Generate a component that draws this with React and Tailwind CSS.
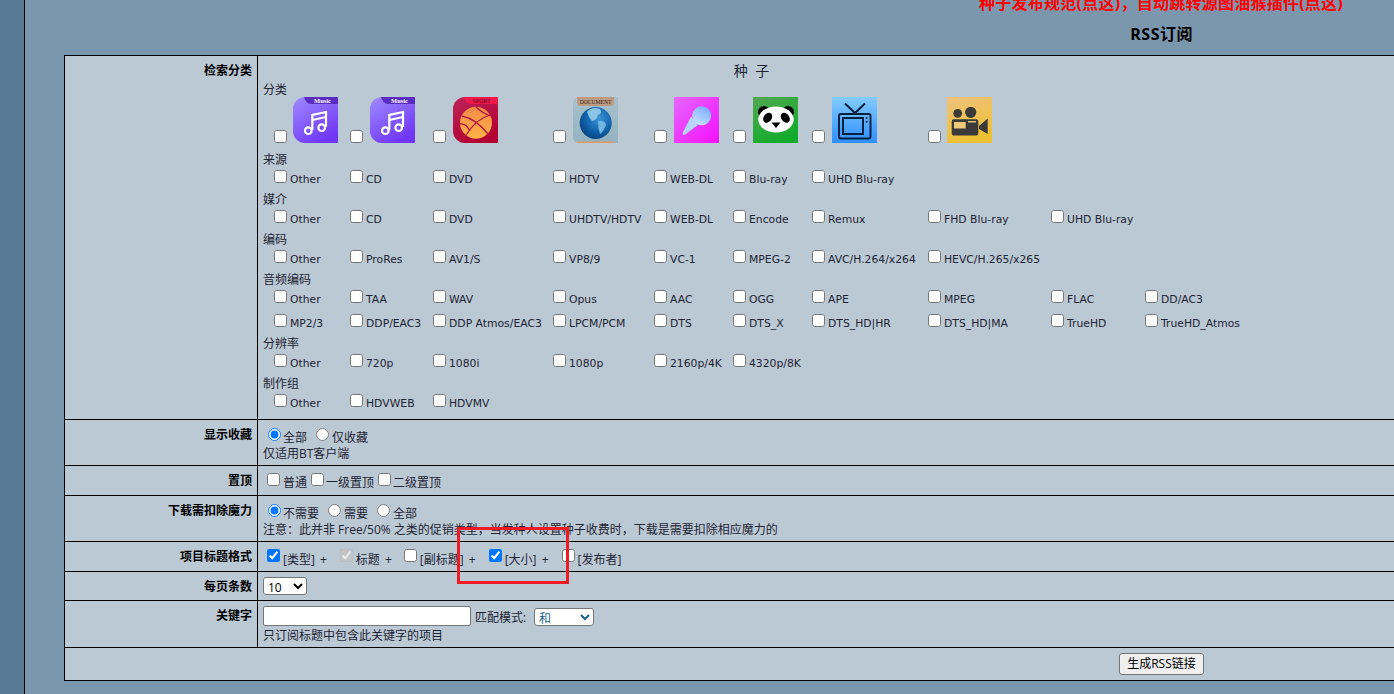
import React from "react";

const FONT = { fontFamily: '"Open Sans", "Noto Sans CJK SC", sans-serif' };

const COLS = "grid grid-cols-[87px_83px_120px_101px_79px_79px_116px_123px_94px_95px]";

const SECTIONS = [
  { title: "来源", rows: [["Other", "CD", "DVD", "HDTV", "WEB-DL", "Blu-ray", "UHD Blu-ray"]] },
  { title: "媒介", rows: [["Other", "CD", "DVD", "UHDTV/HDTV", "WEB-DL", "Encode", "Remux", "FHD Blu-ray", "UHD Blu-ray"]] },
  { title: "编码", rows: [["Other", "ProRes", "AV1/S", "VP8/9", "VC-1", "MPEG-2", "AVC/H.264/x264", "HEVC/H.265/x265"]] },
  {
    title: "音频编码",
    rows: [
      ["Other", "TAA", "WAV", "Opus", "AAC", "OGG", "APE", "MPEG", "FLAC", "DD/AC3"],
      ["MP2/3", "DDP/EAC3", "DDP Atmos/EAC3", "LPCM/PCM", "DTS", "DTS_X", "DTS_HD|HR", "DTS_HD|MA", "TrueHD", "TrueHD_Atmos"],
    ],
  },
  { title: "分辨率", rows: [["Other", "720p", "1080i", "1080p", "2160p/4K", "4320p/8K"]] },
  { title: "制作组", rows: [["Other", "HDVWEB", "HDVMV"]] },
];

const Box = ({ className = "", ...rest }) => (
  <input type="checkbox" className={"w-[13px] h-[13px] " + className} readOnly {...rest} />
);

const Radio = ({ className = "", ...rest }) => (
  <input type="radio" className={"w-[13px] h-[13px] " + className} readOnly {...rest} />
);

const MusicIcon = ({ id }) => (
  <svg width="45" height="46" viewBox="0 0 45 46" className="block">
    <defs>
      <linearGradient id={id} x1="0" y1="0" x2="0.6" y2="1">
        <stop offset="0" stopColor="#a08cff" />
        <stop offset="1" stopColor="#7037f5" />
      </linearGradient>
    </defs>
    <path d="M12 0H45V46H12A12 12 0 0 1 0 34V12A12 12 0 0 1 12 0Z" fill={`url(#${id})`} />
    <path d="M11 0H45V7H18Q13 7 11 0Z" fill="#5a2cc0" />
    <text x="29.5" y="5.6" fontSize="6.5" fontWeight="700" fill="#fff" textAnchor="middle" fontFamily="Liberation Serif, serif">Music</text>
    <g fill="none" stroke="#fff" strokeWidth="2.2">
      <circle cx="15.3" cy="33.7" r="3.3" />
      <circle cx="28.7" cy="30.7" r="3.3" />
      <path d="M19.3 33V18L33 15V30" />
      <path d="M19.3 23L33 20" />
    </g>
  </svg>
);

const SportIcon = () => (
  <svg width="45" height="46" viewBox="0 0 45 46" className="block">
    <defs>
      <linearGradient id="sp" x1="0" y1="0" x2="0.5" y2="1">
        <stop offset="0" stopColor="#bd2459" />
        <stop offset="1" stopColor="#b30032" />
      </linearGradient>
      <linearGradient id="ball" x1="0" y1="0" x2="0" y2="1">
        <stop offset="0" stopColor="#f28a4a" />
        <stop offset="1" stopColor="#ffb347" />
      </linearGradient>
    </defs>
    <path d="M12 0H45V46H12A12 12 0 0 1 0 34V12A12 12 0 0 1 12 0Z" fill="url(#sp)" />
    <path d="M11 0H45V7H18Q13 7 11 0Z" fill="#f0184a" />
    <text x="28.5" y="5.8" fontSize="6" fill="#5c0a1e" textAnchor="middle" fontFamily="Liberation Serif, serif">SPORT</text>
    <circle cx="23" cy="25.7" r="16" fill="url(#ball)" />
    <g fill="none" stroke="#b3173f" strokeWidth="1.3">
      <path d="M9 19Q23 22 35 37" />
      <path d="M37 18Q23 22 13 38" />
      <path d="M23 10Q29 16 38 19" />
      <path d="M7 27Q13 26 17 34" />
    </g>
  </svg>
);

const DocIcon = () => (
  <svg width="45" height="46" viewBox="0 0 45 46" className="block">
    <defs>
      <linearGradient id="doc" x1="0" y1="0" x2="0" y2="1">
        <stop offset="0" stopColor="#a7c2cd" />
        <stop offset="1" stopColor="#94b2c0" />
      </linearGradient>
      <radialGradient id="globe" cx="0.6" cy="0.35" r="0.75">
        <stop offset="0" stopColor="#3f94d8" />
        <stop offset="0.6" stopColor="#0f5fa5" />
        <stop offset="1" stopColor="#083c78" />
      </radialGradient>
    </defs>
    <path d="M6 0H45V46H6A6 6 0 0 1 0 40V6A6 6 0 0 1 6 0Z" fill="url(#doc)" />
    <path d="M4 0H41V6Q41 9 37 9H8Q4 9 4 6Z" fill="#bd9a80" />
    <text x="22.5" y="7" fontSize="5.6" fill="#2e2520" textAnchor="middle" fontFamily="Liberation Serif, serif">DOCUMENT</text>
    <rect x="4" y="44.5" width="37" height="1.5" fill="#dd9b63" />
    <circle cx="22.7" cy="26" r="16" fill="url(#globe)" />
    <path d="M14 15Q19 9 27 12Q30 16 25 18Q24 23 19 24Q16 21 14 15Z" fill="#8cc4e6" />
    <path d="M25 24Q32 23 33 28Q30 35 27 37Q25 31 25 24Z" fill="#6fb6e0" />
  </svg>
);

const MicIcon = () => (
  <svg width="45" height="46" viewBox="0 0 45 46" className="block">
    <defs>
      <linearGradient id="micbg" x1="0" y1="0" x2="1" y2="1">
        <stop offset="0" stopColor="#e668ff" />
        <stop offset="1" stopColor="#f40fff" />
      </linearGradient>
      <linearGradient id="mic" x1="0.8" y1="0" x2="0.2" y2="1">
        <stop offset="0" stopColor="#78aaff" />
        <stop offset="1" stopColor="#c9e4ff" />
      </linearGradient>
    </defs>
    <rect width="45" height="46" fill="url(#micbg)" />
    <circle cx="27.7" cy="18.7" r="9.5" fill="url(#mic)" />
    <path d="M17 19.5L24 28L11 37.5L9 38L8.5 36Z" fill="#b5d6fb" />
  </svg>
);

const PandaIcon = () => (
  <svg width="45" height="46" viewBox="0 0 45 46" className="block">
    <defs>
      <linearGradient id="pan" x1="0" y1="0" x2="0.5" y2="1">
        <stop offset="0" stopColor="#52a852" />
        <stop offset="1" stopColor="#14ab2c" />
      </linearGradient>
    </defs>
    <rect width="45" height="46" fill="url(#pan)" />
    <circle cx="11" cy="15" r="6" fill="#000" />
    <circle cx="35" cy="15" r="6" fill="#000" />
    <ellipse cx="23" cy="22.5" rx="17.7" ry="13" fill="#fff" />
    <ellipse cx="14.7" cy="20.7" rx="4" ry="5.5" transform="rotate(35 14.7 20.7)" fill="#000" />
    <ellipse cx="32.3" cy="20.7" rx="4" ry="5.5" transform="rotate(-35 32.3 20.7)" fill="#000" />
    <path d="M18.5 25.5H27.5L23 31Z" fill="#000" />
  </svg>
);

const TvIcon = () => (
  <svg width="45" height="46" viewBox="0 0 45 46" className="block">
    <defs>
      <linearGradient id="tv" x1="0" y1="0" x2="0" y2="1">
        <stop offset="0" stopColor="#83ccff" />
        <stop offset="1" stopColor="#2f8fff" />
      </linearGradient>
    </defs>
    <rect width="45" height="46" fill="url(#tv)" />
    <g fill="none" stroke="#06203f" strokeWidth="2">
      <path d="M13 6.5L23 16L33 6.5" />
      <rect x="7" y="17" width="31.5" height="24.5" rx="2" />
      <rect x="11" y="21" width="20" height="16" />
    </g>
    <circle cx="34.7" cy="21" r="1" fill="#06203f" />
    <circle cx="34.7" cy="24.7" r="1" fill="#06203f" />
  </svg>
);

const CamIcon = () => (
  <svg width="45" height="46" viewBox="0 0 45 46" className="block">
    <defs>
      <linearGradient id="cam" x1="0" y1="0" x2="0.3" y2="1">
        <stop offset="0" stopColor="#efc27e" />
        <stop offset="1" stopColor="#edc135" />
      </linearGradient>
    </defs>
    <rect width="45" height="46" fill="url(#cam)" />
    <circle cx="10.7" cy="16.3" r="4.4" fill="#3b3a38" />
    <circle cx="23.7" cy="15.3" r="5.6" fill="#3b3a38" />
    <path d="M4.7 24.3Q4.7 22.3 6.7 22.3H29.3Q31.3 22.3 31.3 24.3V36.5Q31.3 38.5 29.3 38.5H6.7Q4.7 38.5 4.7 36.5ZM32 29L40.7 21.5V37L32 32Z" fill="#3b3a38" />
    <rect x="7" y="25" width="11.7" height="6.5" fill="#f0c87a" />
    <rect x="21" y="24" width="8" height="1.5" fill="#f0c87a" />
  </svg>
);

const ICONS = [
  { icon: <MusicIcon id="m1" />, cls: "pl-[11px] gap-[6px]" },
  { icon: <MusicIcon id="m2" />, cls: "gap-[7px]" },
  { icon: <SportIcon />, cls: "gap-[7px]" },
  { icon: <DocIcon />, cls: "gap-[7px]" },
  { icon: <MicIcon />, cls: "gap-[7px]" },
  { icon: <PandaIcon />, cls: "gap-[7px]" },
  { icon: <TvIcon />, cls: "gap-[7px]" },
  { icon: <CamIcon />, cls: "gap-[6px]" },
];

const Row = ({ label, className = "", children }) => (
  <div className={"flex border-t border-black " + className}>
    <div className="w-[192px] shrink-0 text-right font-bold pr-[5px] pt-[7px] leading-4 text-black">{label}</div>
    <div className="flex-1 border-l border-black pl-[5px] min-w-0">{children}</div>
  </div>
);

export default function App() {
  return (
    <div style={FONT} className="relative flex h-[694px] overflow-hidden text-xs text-[#1d2433] bg-[#7b97ad]">
      <div className="w-[25px] shrink-0 bg-[#587a94] border-r border-black" />

      <div className="flex-1 min-w-0 pl-[39px]">
        <div className="h-[55px] w-[1330px] flow-root">
          <p className="text-right pr-[51px] text-base font-bold text-[#ff0000] leading-5 -mt-[7px] tracking-[0.25px]">
            种子发布规范(点这)，自动跳转源图油猴插件(点这)
          </p>
          <p className="text-right pr-[201px] text-base font-bold text-black leading-5 mt-[11px] tracking-[0.5px]">RSS订阅</p>
        </div>

        <div className="w-[1500px] border-l border-b border-black bg-[#bbc9d5]">
          <Row label="检索分类" className="h-[364px]">
            <div className="w-[977px]">
              <p className="text-center text-sm leading-5 pt-[5px] whitespace-pre">种  子</p>
              <p className="leading-5 -mt-[1px]">分类</p>
              <div className={COLS + " h-[46px] -mt-[3px]"}>
                {ICONS.map((item, i) => (
                  <div key={i} className={"flex items-end " + item.cls}>
                    <Box />
                    {item.icon}
                  </div>
                ))}
              </div>
              <div className="pt-[7px]">
                {SECTIONS.map((s) => (
                  <div key={s.title}>
                    <p className="leading-5">{s.title}</p>
                    {s.rows.map((row, r) => (
                      <div key={r} className={COLS + (r > 0 ? " mt-1" : "")}>
                        {row.map((name, i) => (
                          <label
                            key={name + i}
                            className={"h-5 leading-[18px] whitespace-nowrap text-[10.8px] font-['DejaVu_Sans',sans-serif] " + (i === 0 ? "pl-[11px]" : "")}
                          >
                            <Box className="mr-[3px]" />
                            {name}
                          </label>
                        ))}
                      </div>
                    ))}
                  </div>
                ))}
              </div>
            </div>
          </Row>

          <Row label="显示收藏" className="h-[46px]">
            <div className="pt-[8px] pl-[5px] leading-4 h-[25px]">
              <Radio defaultChecked name="fav" className="mr-[2px] align-[1px]" />全部
              <Radio name="fav" className="ml-[9px] mr-[3px] align-[1px]" />仅收藏
            </div>
            <p className="leading-4 mt-[1px]">仅适用BT客户端</p>
          </Row>

          <Row label="置顶" className="h-[30px]">
            <div className="pt-[7px] pl-[4px] leading-4">
              <Box className="mr-[3px] align-[1px]" />普通
              <Box className="ml-[4px] mr-[2px] align-[1px]" />一级置顶
              <Box className="ml-[4px] mr-[2px] align-[1px]" />二级置顶
            </div>
          </Row>

          <Row label="下载需扣除魔力" className="h-[46px]">
            <div className="pt-[8px] pl-[5px] leading-4 h-[25px]">
              <Radio defaultChecked name="magic" className="mr-[2px] align-[1px]" />不需要
              <Radio name="magic" className="ml-[9px] mr-[3px] align-[1px]" />需要
              <Radio name="magic" className="ml-[9px] mr-[3px] align-[1px]" />全部
            </div>
            <p className="leading-4 mt-[1px]">注意：此并非 Free/50% 之类的促销类型，当发种人设置种子收费时，下载是需要扣除相应魔力的</p>
          </Row>

          <Row label="项目标题格式" className="h-[30px]">
            <div className="pt-[7px] pl-[4px] leading-4 whitespace-nowrap [word-spacing:2px]">
              <Box defaultChecked className="mr-[3px] align-[2px]" />[类型] +
              <Box defaultChecked disabled className="ml-[13px] mr-[3px] align-[2px]" />标题 +
              <Box className="ml-[12px] mr-[3px] align-[2px]" />[副标题] +
              <Box defaultChecked className="ml-[13px] mr-[3px] align-[2px]" />[大小] +
              <Box className="ml-[13px] mr-[3px] align-[2px]" />[发布者]
            </div>
          </Row>

          <Row label="每页条数" className="h-[29px]">
            <div className="pt-[5px]">
              <select className="w-[44px] h-[18px] bg-white border border-[#767676] rounded-[3px] text-xs text-black appearance-auto">
                <option>10</option>
              </select>
            </div>
          </Row>

          <Row label="关键字" className="h-[47px]">
            <div className="pt-[5px] flex items-center h-[25px]">
              <input type="text" className="w-[208px] h-[20px] bg-white border border-[#767676] rounded-[2px]" />
              <span className="ml-[4px] w-[59px] mt-[4px]">匹配模式:</span>
              <select className="w-[60px] h-[18px] mt-[2px] bg-white border border-[#767676] rounded-[3px] text-xs text-[#1a5f8a] appearance-auto">
                <option>和</option>
              </select>
            </div>
            <p className="leading-4 mt-[2px]">只订阅标题中包含此关键字的项目</p>
          </Row>

          <div className="flex h-[33px] border-t border-black items-center pl-[1054px]">
            <button className="w-[85px] h-[22px] bg-[#efefef] border border-[#767676] rounded-[3px] text-xs text-black leading-none">
              生成RSS链接
            </button>
          </div>
        </div>
      </div>

      <div className="absolute left-[457px] top-[527px] w-[112px] h-[57px] border-[3px] border-[#ee1c25]" />
    </div>
  );
}
